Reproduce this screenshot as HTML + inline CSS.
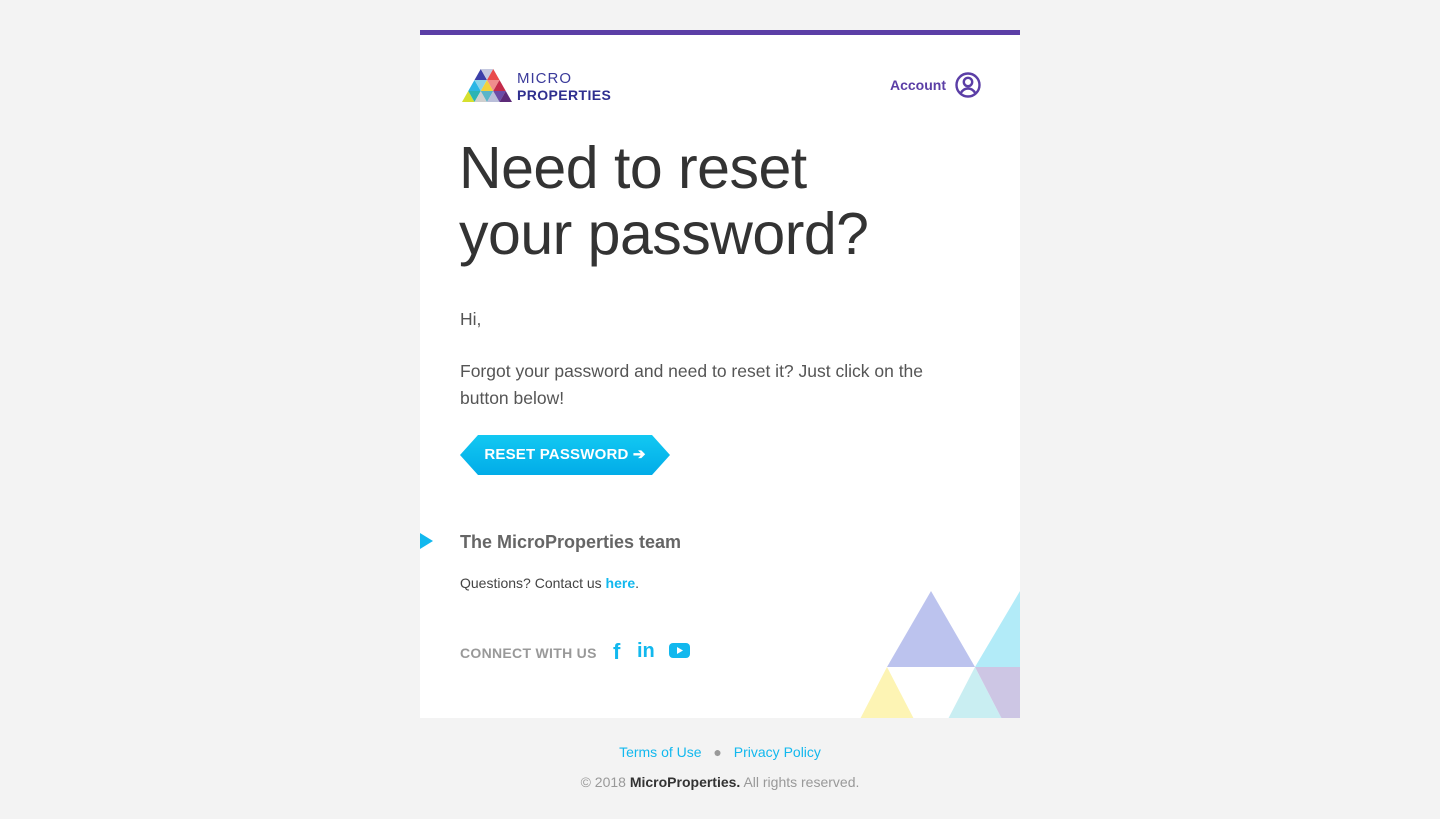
<!DOCTYPE html>
<html><head><meta charset="utf-8"><style>
*{margin:0;padding:0;box-sizing:border-box}
body{width:1440px;height:819px;background:#f3f3f3;font-family:"Liberation Sans",Arial,sans-serif;position:relative;overflow:hidden}
.card{position:absolute;left:420px;top:30px;width:600px;height:688px;background:#fff;border-top:5px solid #5b3ea6;overflow:hidden}
.abs{position:absolute}
h1{position:absolute;left:39px;top:100px;font-weight:400;font-size:59px;line-height:66px;color:#333;letter-spacing:-0.5px}
p{color:#555;font-size:17.5px;line-height:27px}
</style></head><body>
<div class="card">
  <svg class="abs" style="left:42px;top:34px" width="50" height="33" viewBox="0 0 50 33">
    <polygon points="18.75,0 25,11 12.5,11" fill="#3b3fa8"/>
    <polygon points="18.75,0 31.25,0 25,11" fill="#c5c9df"/>
    <polygon points="31.25,0 37.5,11 25,11" fill="#e94b4b"/>
    <polygon points="12.5,11 18.75,22 6.25,22" fill="#2ab6e5"/>
    <polygon points="12.5,11 25,11 18.75,22" fill="#8cd3e8"/>
    <polygon points="25,11 31.25,22 18.75,22" fill="#f2d23c"/>
    <polygon points="25,11 37.5,11 31.25,22" fill="#f08d8d"/>
    <polygon points="37.5,11 43.75,22 31.25,22" fill="#c32b4a"/>
    <polygon points="6.25,22 12.5,33 0,33" fill="#d6e02f"/>
    <polygon points="6.25,22 18.75,22 12.5,33" fill="#2bb4b4"/>
    <polygon points="18.75,22 25,33 12.5,33" fill="#cfcfcf"/>
    <polygon points="18.75,22 31.25,22 25,33" fill="#59b5c9"/>
    <polygon points="31.25,22 37.5,33 25,33" fill="#b9bed9"/>
    <polygon points="31.25,22 43.75,22 37.5,33" fill="#6a4ca7"/>
    <polygon points="43.75,22 50,33 37.5,33" fill="#5d2a78"/>
  </svg>
  <div class="abs" style="left:97px;top:36px;color:#3a3a9a;font-size:15px;letter-spacing:1px;line-height:15px">MICRO</div>
  <div class="abs" style="left:97px;top:52px;color:#2f2f8f;font-size:14px;font-weight:700;letter-spacing:0.4px;line-height:16px">PROPERTIES</div>
  <div class="abs" style="left:470px;top:42px;color:#5b3ea6;font-size:14px;font-weight:700">Account</div>
  <svg class="abs" style="left:535px;top:37px" width="26" height="26" viewBox="0 0 26 26" fill="none" stroke="#5b3ea6" stroke-width="2.4">
    <circle cx="13" cy="13" r="11.5"/><circle cx="13" cy="10" r="4.2"/><path d="M5.5 21.5c2-3.8 4.5-5 7.5-5s5.5 1.2 7.5 5"/>
  </svg>
  <h1>Need to reset<br>your password?</h1>
  <p class="abs" style="left:40px;top:271px">Hi,</p>
  <p class="abs" style="left:40px;top:323px;width:500px">Forgot your password and need to reset it? Just click on the button below!</p>
  <div class="abs" style="left:40px;top:400px;width:210px;height:40px;background:linear-gradient(180deg,#12c8f2,#02ace8);clip-path:polygon(18px 0,192px 0,210px 20px,192px 40px,18px 40px,0 20px);color:#fff;font-weight:700;font-size:15px;line-height:40px;text-align:center;letter-spacing:0.2px">RESET PASSWORD ➔</div>
  <div class="abs" style="left:0;top:498px;width:0;height:0;border-top:8px solid transparent;border-bottom:8px solid transparent;border-left:13px solid #12b8ee"></div>
  <div class="abs" style="left:40px;top:497px;font-size:18px;font-weight:700;color:#666">The MicroProperties team</div>
  <div class="abs" style="left:40px;top:540px;font-size:14px;color:#444">Questions? Contact us <b style="color:#12b8ee">here</b>.</div>
  <div class="abs" style="left:40px;top:610px;font-size:14px;font-weight:700;color:#999;letter-spacing:0.3px">CONNECT WITH US</div>
  <div class="abs" style="left:193px;top:604px;font-size:22px;font-weight:700;color:#12b8ee">f</div>
  <div class="abs" style="left:217px;top:605px;font-size:20px;font-weight:700;color:#12b8ee">in</div>
  <svg class="abs" style="left:249px;top:608px" width="21" height="15" viewBox="0 0 21 15"><rect width="21" height="15" rx="4" fill="#12b8ee"/><polygon points="8,4 14,7.5 8,11" fill="#fff"/></svg>
  <svg class="abs" style="left:0;top:0" width="600" height="688">
    <polygon points="511,556 555,632 467,632" fill="#bcc3ee"/>
    <polygon points="555,632 600,556 600,632" fill="#b2ebf8"/>
    <polygon points="467,632 496,688 438,688" fill="#fdf4b4"/>
    <polygon points="555,632 584,688 526,688" fill="#c9eef2"/>
    <polygon points="555,632 600,632 600,688 584,688" fill="#cdc6e4"/>
  </svg>
</div>
<div class="abs" style="left:0;top:744px;width:1440px;text-align:center;font-size:14px;color:#12b8ee">Terms of Use <span style="color:#999;margin:0 8px">●</span> Privacy Policy</div>
<div class="abs" style="left:0;top:774px;width:1440px;text-align:center;font-size:14px;color:#999">© 2018 <b style="color:#333">MicroProperties.</b> All rights reserved.</div>
</body></html>
